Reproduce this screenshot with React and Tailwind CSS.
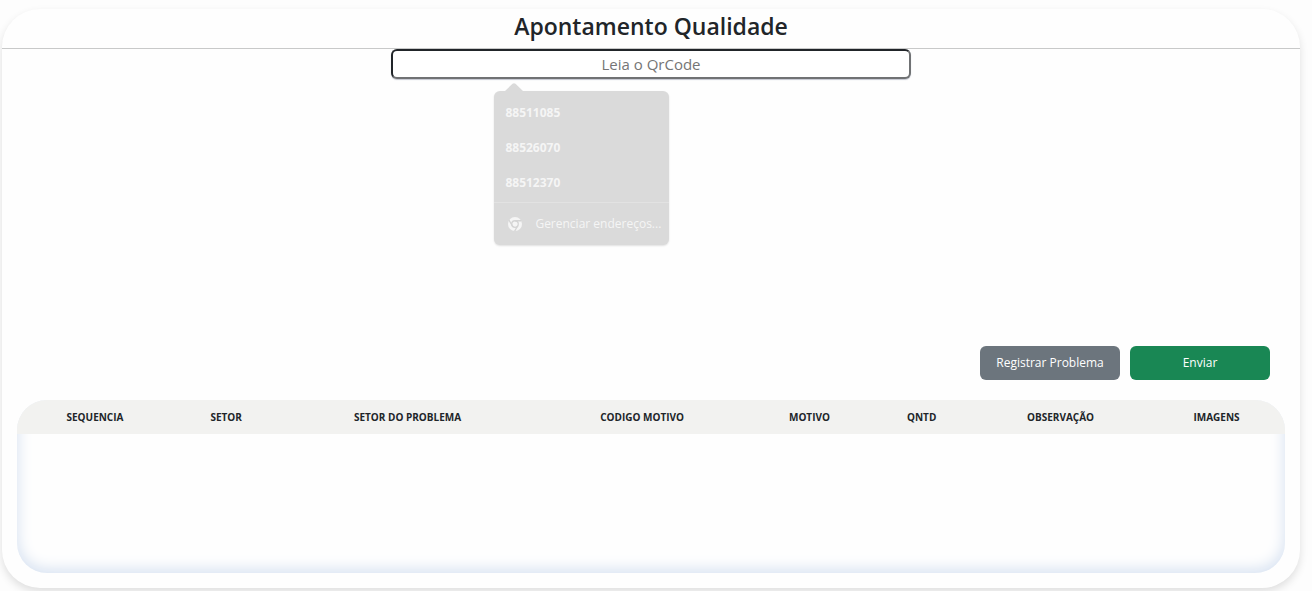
import React from "react";

const suggestions = ["88511085", "88526070", "88512370"];

const columns = [
  { label: "SEQUENCIA", width: "w-[12.3%]" },
  { label: "SETOR", width: "w-[8.4%]" },
  { label: "SETOR DO PROBLEMA", width: "w-[20.2%]" },
  { label: "CODIGO MOTIVO", width: "w-[16.8%]" },
  { label: "MOTIVO", width: "w-[9.6%]" },
  { label: "QNTD", width: "w-[8.1%]" },
  { label: "OBSERVAÇÃO", width: "w-[13.8%]" },
  { label: "IMAGENS", width: "w-[10.8%]" },
];

function ChromeIcon() {
  return (
    <svg viewBox="0 0 24 24" className="size-3.5 shrink-0" aria-hidden="true">
      <circle cx="12" cy="12" r="12" fill="#f5f5f5" />
      <g stroke="#d4d4d4" strokeWidth="2.2" fill="none">
        <circle cx="12" cy="12" r="5.6" />
        <path d="M12 6.4H23M7.2 14.8L1.6 5.2M16.8 14.8L11.3 24.4" />
      </g>
    </svg>
  );
}

function Suggestions() {
  return (
    <div className="absolute top-[42px] left-[103px] w-[175px] rounded-md bg-[#dadada] text-xs text-[#f5f5f5] shadow-[0_1px_2px_rgba(0,0,0,0.12)]">
      <svg viewBox="0 0 18 8" className="absolute -top-2 left-[11px] h-2 w-[18px]" aria-hidden="true">
        <path d="M0 8L7.5 0.8Q9 -0.4 10.5 0.8L18 8Z" fill="#dadada" />
      </svg>
      <ul className="pt-1 pb-0.5">
        {suggestions.map((value) => (
          <li key={value}>
            <button type="button" className="flex h-[35px] w-full items-center px-[11px] font-bold">
              {value}
            </button>
          </li>
        ))}
      </ul>
      <button
        type="button"
        className="flex h-[43px] w-full items-center gap-[13px] border-t border-[#e2e2e2] pl-3.5 whitespace-nowrap"
      >
        <ChromeIcon />
        Gerenciar endereços...
      </button>
    </div>
  );
}

export default function App() {
  return (
    <div className="flex min-h-screen flex-col bg-[#fdfdfd] pt-[9px] pr-3 pb-[3px] pl-0.5 font-['Open_Sans','Noto_Sans',sans-serif] text-[#212529]">
      <main className="flex flex-1 flex-col rounded-[38px] bg-[#fefefe] pb-[15px] shadow-[0_4px_8px_rgba(0,0,0,0.12)]">
        <h1 className="flex h-10 items-center justify-center border-b border-[#c8c9c9] pb-1 text-[23px] font-semibold">
          Apontamento Qualidade
        </h1>
        <div className="relative mx-auto w-2/5">
          <input
            type="text"
            aria-label="Leia o QrCode"
            placeholder="Leia o QrCode"
            className="block h-[30px] w-full rounded-md border-2 border-t-[#212529] border-r-[#707274] border-b-[#707274] border-l-[#212529] bg-white text-center text-[15px] shadow-[0_1px_1px_rgba(60,70,100,0.3)] outline-none placeholder:text-[#757575]"
          />
          <Suggestions />
        </div>
        <div className="mt-auto flex justify-end gap-2.5 pt-20 pr-[30px] text-xs text-white">
          <button type="button" className="h-[34px] w-[140px] rounded-md bg-[#6c757d]">
            Registrar Problema
          </button>
          <button type="button" className="h-[34px] w-[140px] rounded-md bg-[#198754]">
            Enviar
          </button>
        </div>
        <section className="mx-[15px] mt-5 min-h-[173px] overflow-hidden rounded-[30px] shadow-[inset_0_-3px_15px_#d3dff0]">
          <table className="w-full table-fixed">
            <thead className="bg-[#f2f2f0]">
              <tr className="h-[34px]">
                {columns.map(({ label, width }) => (
                  <th key={label} scope="col" className={`${width} p-0 text-center text-[10px] font-bold`}>
                    {label}
                  </th>
                ))}
              </tr>
            </thead>
            <tbody />
          </table>
        </section>
      </main>
    </div>
  );
}
